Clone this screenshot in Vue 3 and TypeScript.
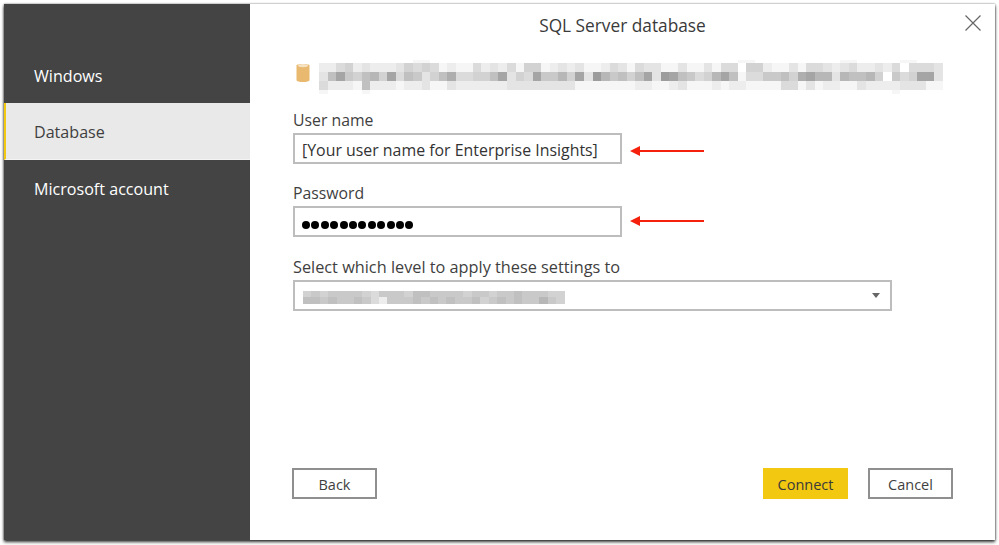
<script setup lang="ts">
const gray = (ch: string): string => {
  const v = 255 - parseInt(ch, 16) * 9
  return `rgb(${v},${v},${v})`
}
const toRows = (rows: string[]) => rows.map((r) => r.split('').map(gray))

const urlRows = toRows([
  '0000000000011000000000000000000000000000000000000110000000000110000011000',
  '2245232223545412114232415512323112431433113113144055211314432342232404443',
  '37a65785a476357944557a354a6685a3b86757a3ba76458a714466759a883877850645aa3',
  '4222172221223113222222333333331111111221123111212211114413122113222233311',
  '1000010000000000000000000000000000000000000000000000000000000000000100000'
])
const selectRows = toRows([
  '5656666546665776666566566766655',
  '7767667642666767676675676766865'
])
const dots = Array.from({ length: 12 }, (_, i) => i)
const menu = ['Windows', 'Database', 'Microsoft account']
</script>

<template>
  <div class="page">
    <div class="window">
      <nav class="side">
        <div v-for="item in menu" :key="item" class="item" :class="{ active: item === 'Database' }">{{ item }}</div>
      </nav>
      <main class="main">
        <svg class="close" viewBox="0 0 16 16" width="16" height="16">
          <path d="M0.5 0.5L15.5 15.5M15.5 0.5L0.5 15.5" stroke="#666" stroke-width="1.2" fill="none" />
        </svg>
        <h1 class="title">SQL Server database</h1>
        <div class="source">
          <svg class="db" viewBox="0 0 14 21" width="14" height="21">
            <path d="M0.5 3.5C0.5 1.5 13.5 1.5 13.5 3.5V18C13.5 20.8 0.5 20.8 0.5 18Z" fill="#e8b96f" />
            <ellipse cx="7" cy="3.6" rx="5" ry="1.7" fill="#f6e3c4" />
          </svg>
          <div class="pixels url">
            <div v-for="(row, r) in urlRows" :key="r" class="px-row">
              <span v-for="(c, i) in row" :key="i" class="px" :style="{ background: c }"></span>
            </div>
          </div>
        </div>

        <label class="label first">User name</label>
        <div class="field-row">
          <div class="input">[Your user name for Enterprise Insights]</div>
          <svg class="arrow" viewBox="0 0 74 10" width="74" height="10">
            <path d="M0 5L10 0V4H74V6H10V10Z" fill="#f5210c" />
          </svg>
        </div>

        <label class="label second">Password</label>
        <div class="field-row">
          <div class="input dots">
            <span v-for="d in dots" :key="d" class="dot"></span>
          </div>
          <svg class="arrow up" viewBox="0 0 74 10" width="74" height="10">
            <path d="M0 5L10 0V4H74V6H10V10Z" fill="#f5210c" />
          </svg>
        </div>

        <label class="label third">Select which level to apply these settings to</label>
        <div class="select">
          <div class="pixels sel">
            <div v-for="(row, r) in selectRows" :key="r" class="px-row">
              <span v-for="(c, i) in row" :key="i" class="px small" :style="{ background: c }"></span>
            </div>
          </div>
          <span class="caret"></span>
        </div>

        <div class="footer">
          <button class="btn">Back</button>
          <div class="right">
            <button class="btn primary">Connect</button>
            <button class="btn">Cancel</button>
          </div>
        </div>
      </main>
    </div>
  </div>
</template>

<style>
html, body { margin: 0; background: #fff; }
</style>

<style scoped>
.page {
  width: 999px;
  height: 545px;
  padding: 4px 4px 5px 4px;
  box-sizing: border-box;
  background: #fff;
  font-family: "Open Sans", "Noto Sans", sans-serif;
  overflow: hidden;
}
.window {
  display: flex;
  width: 991px;
  height: 536px;
  background: #fff;
  box-shadow: 0 2px 3px rgba(0, 0, 0, 0.8), 0 0 2px rgba(0, 0, 0, 0.45);
}
.side {
  width: 246px;
  flex: none;
  background: #444444;
  padding-top: 43px;
  box-sizing: border-box;
}
.item {
  height: 56px;
  display: flex;
  align-items: center;
  padding: 2px 0 0 30px;
  color: #fff;
  font-size: 16.1px;
  box-sizing: border-box;
}
.item.active {
  background: #e9e9e9;
  color: #3f3f3f;
  border-left: 2px solid #f2c811;
  padding-left: 28px;
  border-bottom: 1px solid #f4f4f4;
  height: 57px;
}
.main {
  flex: 1;
  position: relative;
  display: flex;
  flex-direction: column;
  padding: 0 41px 0 43px;
  min-width: 0;
}
.close {
  position: absolute;
  top: 11px;
  right: 14px;
}
.title {
  margin: 11px -41px 0 -43px;
  font-size: 17.3px;
  line-height: 22px;
  font-weight: 400;
  text-align: center;
  color: #3a3a3a;
}
.source {
  display: flex;
  align-items: flex-start;
  margin-top: 23px;
  height: 37px;
}
.db {
  margin-left: 3px;
  margin-top: 2px;
  flex: none;
}
.pixels {
  filter: blur(0.6px);
  display: flex;
  flex-direction: column;
}
.url {
  margin-left: 9px;
}
.sel {
  margin-top: 3px;
}
.px-row {
  display: flex;
  height: 9px;
}
.url .px-row:first-child { height: 3px; }
.url .px-row:last-child { height: 4px; }
.px {
  width: 8.55px;
  flex: none;
}
.px.small {
  width: 8.45px;
}
.sel .px-row {
  height: 6.5px;
}
.label {
  display: block;
  font-size: 15.8px;
  line-height: 22px;
  color: #3f3f3f;
}
.label.first { margin-top: 12px; }
.label.second { margin-top: 18px; }
.label.third { margin-top: 19px; font-size: 16.3px; }
.field-row {
  display: flex;
  align-items: center;
  gap: 8px;
  margin-top: 2px;
}
.input {
  width: 329px;
  height: 31px;
  box-sizing: border-box;
  border: 2px solid #bdbdbd;
  padding-left: 7px;
  font-size: 15.9px;
  line-height: 31px;
  color: #333;
  white-space: nowrap;
  overflow: hidden;
}
.input.dots {
  display: flex;
  align-items: center;
  gap: 1.4px;
  padding-top: 6px;
  height: 31px;
}
.dot {
  width: 8px;
  height: 8px;
  border-radius: 50%;
  background: #000;
  flex: none;
}
.arrow { flex: none; margin-top: 4px; }
.arrow.up { margin-top: -1px; }
.select {
  width: 599px;
  height: 31px;
  box-sizing: border-box;
  border: 2px solid #bdbdbd;
  display: flex;
  align-items: center;
  justify-content: space-between;
  padding: 0 10px 0 8px;
  margin-top: 2px;
}
.caret {
  width: 0;
  height: 0;
  border-left: 4.5px solid transparent;
  border-right: 4.5px solid transparent;
  border-top: 5px solid #666;
}
.footer {
  margin-top: auto;
  margin-bottom: 41px;
  margin-left: -1px;
  display: flex;
  justify-content: space-between;
}
.right {
  display: flex;
  gap: 20px;
  margin-right: 1px;
}
.btn {
  width: 85px;
  height: 31px;
  box-sizing: border-box;
  border: 2px solid #8f8f8f;
  background: #fff;
  color: #3f3f3f;
  font-family: inherit;
  font-size: 14.5px;
  padding: 2px 0 0;
}
.btn.primary {
  background: #f2c811;
  border-color: #f2c811;
  color: #3a3a3a;
}
</style>
